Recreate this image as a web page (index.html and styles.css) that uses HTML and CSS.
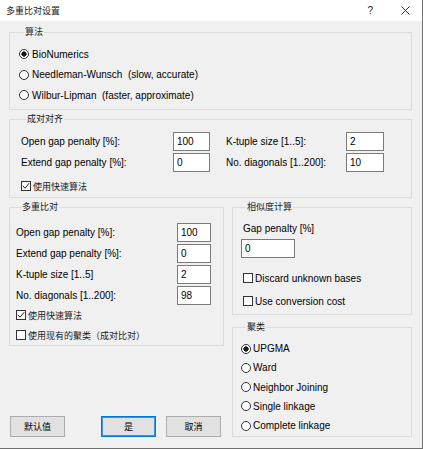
FILE: index.html
```html
<!DOCTYPE html>
<html lang="zh-CN">
<head>
<meta charset="utf-8">
<title>多重比对设置</title>
<link rel="stylesheet" href="styles.css">
</head>
<body>
<div class="window">
  <header class="titlebar">
    <span class="title cjk">多重比对设置</span>
    <span class="help">?</span>
    <span class="close"><svg width="9" height="9" viewBox="0 0 9 9"><path d="M0.5 0.5 L8.5 8.5 M8.5 0.5 L0.5 8.5" stroke="#333" stroke-width="1" fill="none"/></svg></span>
  </header>
  <main class="content">
    <fieldset class="group g-algo">
      <legend class="cjk">算法</legend>
      <label class="opt"><span class="radio on"></span>BioNumerics</label>
      <label class="opt"><span class="radio"></span>Needleman-Wunsch&nbsp; (slow, accurate)</label>
      <label class="opt"><span class="radio"></span>Wilbur-Lipman&nbsp; (faster, approximate)</label>
    </fieldset>

    <fieldset class="group g-pair">
      <legend class="cjk">成对对齐</legend>
      <div class="pair-grid">
        <span class="lbl">Open gap penalty [%]:</span>
        <input class="field" type="text" value="100">
        <span class="lbl rl">K-tuple size [1..5]:</span>
        <input class="field" type="text" value="2">
        <span class="lbl">Extend gap penalty [%]:</span>
        <input class="field" type="text" value="0">
        <span class="lbl rl">No. diagonals [1..200]:</span>
        <input class="field" type="text" value="10">
      </div>
      <label class="check pair-check"><span class="cb"><svg width="8" height="8" viewBox="0 0 8 8"><polyline points="0.8,3.8 3,6.2 7.2,1.2" fill="none" stroke="#222" stroke-width="1"/></svg></span><span class="cjk">使用快速算法</span></label>
    </fieldset>

    <div class="lower">
      <div class="left-col">
        <fieldset class="group g-multi">
          <legend class="cjk">多重比对</legend>
          <div class="multi-grid">
            <span class="lbl">Open gap penalty [%]:</span>
            <input class="field" type="text" value="100">
            <span class="lbl">Extend gap penalty [%]:</span>
            <input class="field" type="text" value="0">
            <span class="lbl">K-tuple size [1..5]</span>
            <input class="field" type="text" value="2">
            <span class="lbl">No. diagonals [1..200]:</span>
            <input class="field" type="text" value="98">
          </div>
          <label class="check multi-check"><span class="cb"><svg width="8" height="8" viewBox="0 0 8 8"><polyline points="0.8,3.8 3,6.2 7.2,1.2" fill="none" stroke="#222" stroke-width="1"/></svg></span><span class="cjk">使用快速算法</span></label>
          <label class="check multi-check"><span class="cb"></span><span class="cjk">使用现有的聚类（成对比对）</span></label>
        </fieldset>

        <div class="buttons">
          <button class="btn cjk" type="button">默认值</button>
          <button class="btn btn-default cjk" type="button">是</button>
          <button class="btn cjk" type="button">取消</button>
        </div>
      </div>

      <div class="right-col">
        <fieldset class="group g-sim">
          <legend class="cjk">相似度计算</legend>
          <span class="gp-label">Gap penalty [%]</span>
          <input class="field gp-field" type="text" value="0">
          <label class="check sim-check first"><span class="cb"></span>Discard unknown bases</label>
          <label class="check sim-check"><span class="cb"></span>Use conversion cost</label>
        </fieldset>

        <fieldset class="group g-clust">
          <legend class="cjk">聚类</legend>
          <label class="opt2"><span class="radio on"></span>UPGMA</label>
          <label class="opt2"><span class="radio"></span>Ward</label>
          <label class="opt2"><span class="radio"></span>Neighbor Joining</label>
          <label class="opt2"><span class="radio"></span>Single linkage</label>
          <label class="opt2"><span class="radio"></span>Complete linkage</label>
        </fieldset>
      </div>
    </div>
  </main>
</div>
</body>
</html>
```

FILE: styles.css
```css
* { box-sizing: border-box; }

html, body {
  margin: 0;
  padding: 0;
}

body {
  background: #f0f0f0;
  font-family: "Liberation Sans", "Noto Sans CJK SC", sans-serif;
  font-size: 10px;
  color: #000;
}

.cjk {
  font-family: "Noto Sans CJK SC", sans-serif;
  font-size: 9px;
  font-weight: 400;
  color: #1a1a1a;
}

.window {
  width: 423px;
  height: 449px;
  border-right: 1px solid #6f6f6f;
  border-bottom: 1px solid #6f6f6f;
  background: #f0f0f0;
  display: flex;
  flex-direction: column;
}

/* title bar */
.titlebar {
  flex: none;
  height: 21px;
  background: #fff;
  display: flex;
  align-items: center;
  padding: 0 12px 0 6px;
}

.help {
  margin-left: auto;
  margin-right: 28px;
  font-size: 10px;
  color: #222;
}

.close {
  display: flex;
}

/* content */
.content {
  flex: 1;
  display: flex;
  flex-direction: column;
  gap: 3px;
  padding: 5px 10px 0 9px;
}

.group {
  margin: 0;
  min-width: 0;
  border: 1px solid #dcdcdc;
  padding: 0;
}

.group > legend {
  margin-left: 5px;
  padding: 0 1px;
  height: 12px;
  line-height: 12px;
}

/* radios */
.radio {
  flex: none;
  width: 10px;
  height: 10px;
  border: 1px solid #333;
  border-radius: 50%;
  background: #fff;
}

.radio.on {
  background: radial-gradient(circle, #1a1a1a 0 2.4px, #fff 2.9px);
}

.opt, .opt2 {
  display: flex;
  align-items: center;
  white-space: nowrap;
}

.opt { height: 20.5px; }
.opt .radio { margin-right: 3px; }

.opt2 { height: 19.25px; }
.opt2 .radio { margin-right: 2px; }

/* checkboxes */
.check {
  display: flex;
  align-items: center;
  white-space: nowrap;
}

.cb {
  flex: none;
  width: 10px;
  height: 10px;
  border: 1px solid #333;
  background: #fff;
  display: flex;
  align-items: center;
  justify-content: center;
  margin-right: 2px;
}

.cb svg { display: block; }

/* inputs */
.field {
  margin: 0;
  height: 19px;
  width: 100%;
  border: 1px solid #7a7a7a;
  background: #fff;
  padding: 0 0 0 3px;
  font-family: "Liberation Sans", sans-serif;
  font-size: 10px;
  color: #000;
  outline: none;
}

.lbl {
  white-space: nowrap;
}

/* algorithm group */
.g-algo {
  padding: 6px 0 3.5px 9px;
}

/* pairwise group */
.g-pair {
  padding: 7px 0 2px 11px;
}

.pair-grid {
  display: grid;
  grid-template-columns: 152px 37px 136px 38px;
  grid-auto-rows: 19px;
  row-gap: 2px;
  align-items: center;
}

.pair-grid .rl {
  padding-left: 16px;
}

.pair-check {
  height: 18px;
  margin-top: 5px;
}

/* lower area */
.lower {
  display: grid;
  grid-template-columns: 215px 180px;
  column-gap: 8px;
}

.left-col {
  display: flex;
  flex-direction: column;
  justify-content: space-between;
}

.right-col {
  display: flex;
  flex-direction: column;
  gap: 6px;
}

.g-multi {
  padding: 10px 0 0 6px;
}

.multi-grid {
  display: grid;
  grid-template-columns: 161px 34px;
  grid-auto-rows: 19px;
  row-gap: 2px;
  align-items: center;
}

.multi-check {
  height: 20px;
}

.g-sim {
  padding: 9px 0 3px 8px;
  display: flex;
  flex-direction: column;
  align-items: flex-start;
}

.gp-label {
  height: 14px;
  line-height: 14px;
  margin-left: 2px;
}

.gp-field {
  width: 54px;
  margin-top: 3px;
}

.sim-check {
  height: 20px;
  margin-top: 3px;
  margin-left: 2px;
}

.sim-check.first {
  margin-top: 10px;
}

.g-clust {
  padding: 6px 0 0.75px 8px;
}

/* buttons */
.buttons {
  display: flex;
  padding-left: 1px;
}

.btn {
  width: 55px;
  height: 21px;
  margin: 0;
  padding: 0;
  border: 1px solid #adadad;
  background: #e1e1e1;
  color: #000;
}

.btn-default {
  margin-left: 36px;
  border-color: #0078d7;
  box-shadow: inset 0 0 0 1px #3d93dc;
}

.btn-default + .btn {
  margin-left: 10px;
}
```
